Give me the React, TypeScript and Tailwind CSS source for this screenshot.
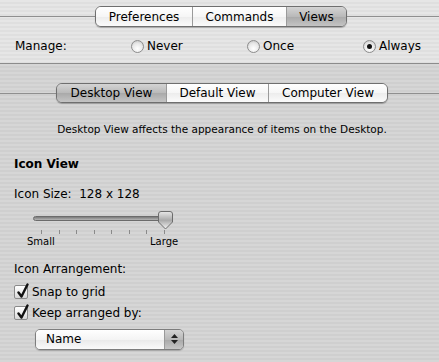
const font = "font-['DejaVu_Sans',sans-serif]";

function Segmented({
    items,
    widths,
    selected,
}: {
    items: string[];
    widths: number[];
    selected: number;
}) {
    return (
        <div className="flex h-full rounded-[6px] border border-[#6f6f6f] overflow-hidden shadow-[0_1px_1px_rgba(0,0,0,0.25)]">
            {items.map((label, i) => (
                <div
                    key={label}
                    style={{ width: widths[i] }}
                    className={
                        (i > 0 ? "border-l border-[#9a9a9a] " : "") +
                        (i === selected
                            ? "bg-[linear-gradient(to_bottom,#d4d4d4,#b9b9b9_50%,#a9a9a9_51%,#c4c4c4)] "
                            : "bg-[linear-gradient(to_bottom,#ffffff,#f6f6f6_50%,#ececec_51%,#fbfbfb)] ") +
                        "flex items-center justify-center text-[12px] text-black"
                    }
                >
                    {label}
                </div>
            ))}
        </div>
    );
}

function Radio({ label, checked }: { label: string; checked?: boolean }) {
    return (
        <div className="flex items-center gap-[3px]">
            <div className="w-[13px] h-[13px] rounded-full border border-[#8c8c8c] bg-[radial-gradient(circle_at_50%_70%,#ffffff,#e8e8e8_55%,#bdbdbd)] flex items-center justify-center">
                {checked && <div className="w-[5px] h-[5px] rounded-full bg-[#111]" />}
            </div>
            <span className="text-[12px]">{label}</span>
        </div>
    );
}

function Checkbox({ label }: { label: string }) {
    return (
        <div className="flex items-center gap-[4px]">
            <div className="relative w-[14px] h-[14px] border border-[#8a8a8a] rounded-[2px] bg-[linear-gradient(to_bottom,#ffffff,#ebebeb_60%,#d6d6d6)]">
                <svg className="absolute left-[1px] top-[-3px]" width="14" height="16" viewBox="0 0 14 16">
                    <path d="M2.5 9.5 L5.5 13.5 L11.5 1.5" fill="none" stroke="#111" strokeWidth="2.4" strokeLinecap="round" strokeLinejoin="round" />
                </svg>
            </div>
            <span className="text-[12px]">{label}</span>
        </div>
    );
}

function Slider() {
    const ticks = [41, 58.5, 76, 93.5, 111, 128.5, 146, 163.5];
    return (
        <div className="relative h-[36px] ml-[33px] w-[150px]">
            <div className="absolute left-0 top-[4px] w-[139px] h-[5px] rounded-full border border-[#6b6b6b] bg-[linear-gradient(to_bottom,#7a7a7a,#b5b5b5)]" />
            <svg className="absolute left-[125px] top-[-1px]" width="15" height="19" viewBox="0 0 15 19">
                <defs>
                    <linearGradient id="knob" x1="0" y1="0" x2="0" y2="1">
                        <stop offset="0" stopColor="#e8e8e8" />
                        <stop offset="0.5" stopColor="#a9a9a9" />
                        <stop offset="1" stopColor="#f5f5f5" />
                    </linearGradient>
                </defs>
                <path d="M0.5 3 Q0.5 0.5 3 0.5 L12 0.5 Q14.5 0.5 14.5 3 L14.5 11 L7.5 18 L0.5 11 Z" fill="url(#knob)" stroke="#6c6c6c" />
            </svg>
            {ticks.map((x) => (
                <div key={x} className="absolute top-[18px] w-px h-[4px] bg-[#8a8a8a]" style={{ left: x - 33 }} />
            ))}
            <span className="absolute left-[-6px] top-[22px] text-[10px]">Small</span>
            <span className="absolute left-[117px] top-[22px] text-[10px]">Large</span>
        </div>
    );
}

export default function App() {
    return (
        <div className={`${font} w-[439px] h-[362px] overflow-hidden text-black bg-[repeating-linear-gradient(to_bottom,#d6d6d6_0px,#d6d6d6_2px,#cfcfcf_2px,#cfcfcf_4px)]`}>
            <div className="h-[64px] border-b border-[#8c8c8c] pt-[6px] bg-[repeating-linear-gradient(to_bottom,#e6e6e6_0px,#e6e6e6_2px,#dfdfdf_2px,#dfdfdf_4px)]">
                <div className="flex items-center h-[21px]">
                    <div className="w-[95px] h-px bg-[#8f8f8f]" />
                    <div className="w-[252px] h-full">
                        <Segmented items={["Preferences", "Commands", "Views"]} widths={[96, 94, 60]} selected={2} />
                    </div>
                    <div className="flex-1 h-px bg-[#8f8f8f]" />
                </div>
                <div className="flex items-center pl-[15px] mt-[11px] h-[16px]">
                    <span className="w-[116px] text-[12px]">Manage:</span>
                    <div className="w-[116px]">
                        <Radio label="Never" />
                    </div>
                    <div className="w-[116px]">
                        <Radio label="Once" />
                    </div>
                    <Radio label="Always" checked />
                </div>
            </div>

            <div className="flex items-center h-[20px] mt-[19px]">
                <div className="w-[56px] h-px bg-[#8f8f8f]" />
                <div className="w-[332px] h-full">
                    <Segmented items={["Desktop View", "Default View", "Computer View"]} widths={[109, 102, 119]} selected={0} />
                </div>
                <div className="flex-1 h-px bg-[#8f8f8f]" />
            </div>

            <p className="mt-[19px] text-center text-[10.5px] pl-[5px]">
                Desktop View affects the appearance of items on the Desktop.
            </p>

            <div className="pl-[14px]">
                <p className="mt-[17px] text-[12px] font-bold">Icon View</p>
                <p className="mt-[12px] text-[12px]">Icon Size:&nbsp;&nbsp;128 x 128</p>
                <div className="mt-[9px] -ml-[14px]">
                    <Slider />
                </div>
                <p className="mt-[12px] text-[12px]">Icon Arrangement:</p>
                <div className="mt-[5px] flex flex-col gap-[3px]">
                    <Checkbox label="Snap to grid" />
                    <Checkbox label="Keep arranged by:" />
                </div>
                <div className="mt-[7px] ml-[21px] w-[149px] h-[21px] flex rounded-[5px] border border-[#7d7d7d] overflow-hidden shadow-[0_1px_1px_rgba(0,0,0,0.2)]">
                    <div className="flex-1 flex items-center pl-[10px] text-[12px] bg-[linear-gradient(to_bottom,#ffffff,#f4f4f4_50%,#e9e9e9_51%,#fafafa)]">
                        Name
                    </div>
                    <div className="w-[19px] border-l border-[#9a9a9a] flex flex-col items-center justify-center gap-[2px] bg-[linear-gradient(to_bottom,#d4d4d4,#b8b8b8_50%,#a8a8a8_51%,#c6c6c6)]">
                        <svg width="7" height="4" viewBox="0 0 7 4"><path d="M3.5 0 L7 4 L0 4 Z" fill="#222" /></svg>
                        <svg width="7" height="4" viewBox="0 0 7 4"><path d="M0 0 L7 0 L3.5 4 Z" fill="#222" /></svg>
                    </div>
                </div>
            </div>
        </div>
    );
}
